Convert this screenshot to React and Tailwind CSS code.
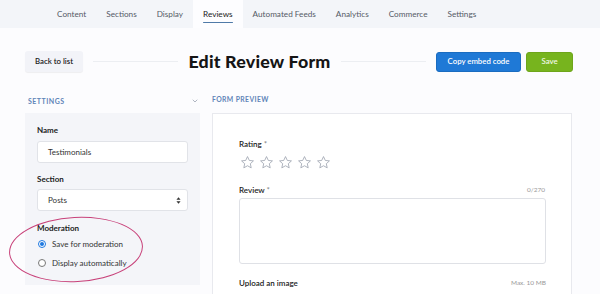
import { ChevronDown } from 'lucide-react';

const tabs = ['Content', 'Sections', 'Display', 'Reviews', 'Automated Feeds', 'Analytics', 'Commerce', 'Settings'];

function Star() {
  return (
    <svg width="15" height="15" viewBox="0 0 24 24" fill="none" stroke="#9ca3af" strokeWidth="1.3" strokeLinejoin="round">
      <path d="M12 2.5l2.9 6.2 6.6.7-5 4.5 1.4 6.6L12 17.2l-5.9 3.3 1.4-6.6-5-4.5 6.6-.7z" />
    </svg>
  );
}

export default function App() {
  return (
    <div className="w-[600px] h-[294px] overflow-hidden bg-[#fcfcfe] text-[#1f2328]" style={{ fontFamily: 'Lato, "Open Sans", sans-serif' }}>
      {/* Tabs */}
      <div className="h-[28px] bg-[#f3f5f9] flex pl-[47px]">
        {tabs.map((t) => (
          <div
            key={t}
            className={`relative px-[10px] flex items-center text-[8.2px] ${t === 'Reviews' ? 'bg-[#fdfdff] text-[#222]' : 'text-[#555b66]'}`}
          >
            {t}
            {t === 'Reviews' && <div className="absolute left-[10px] right-[10px] bottom-[5px] h-[1.5px] bg-[#4f7aa8] rounded" />}
          </div>
        ))}
      </div>

      {/* Header */}
      <div className="flex items-center mt-[23px] h-[21px] pl-[25px] pr-[27px]">
        <button className="h-[21px] w-[58px] rounded-[3px] bg-[#f2f3f8] shadow-[0_1px_1px_rgba(0,0,0,0.06)] text-[7.8px] font-semibold text-[#222]">
          Back to list
        </button>
        <div className="flex-1 h-px bg-[#eceef2] mx-[10px]" />
        <h1 className="text-[17.8px] leading-[21px] font-black tracking-[0.2px] text-[#151515]">Edit Review Form</h1>
        <div className="flex-1 h-px bg-[#eceef2] mx-[10px]" />
        <button className="h-[20px] w-[85px] rounded-[3px] bg-[#1f79d6] text-white text-[7.8px] font-semibold border border-[#1a6cc0]">
          Copy embed code
        </button>
        <button className="ml-[5px] h-[20px] w-[47px] rounded-[3px] bg-[#77b41e] text-[#f1f8e4] text-[7.8px] font-semibold border border-[#6ea51b]">
          Save
        </button>
      </div>

      {/* Body */}
      <div className="flex gap-[12px] pl-[25px] mt-[22px]">
        {/* Settings */}
        <div className="w-[175px] shrink-0">
          <div className="flex items-center justify-between h-[14px] pl-[3px] pr-[1px]">
            <span className="text-[7px] font-bold tracking-[0.5px] text-[#5f84b8]">SETTINGS</span>
            <ChevronDown className="w-[8px] h-[8px] text-[#8a93a3]" strokeWidth={2} />
          </div>
          <div className="relative mt-[5px] bg-[#f4f5f9] h-[172px] px-[12px] pt-[11px]">
            <div className="text-[8px] leading-[12px] font-bold text-[#222]">Name</div>
            <div className="mt-[5px] h-[22px] w-[151px] bg-white border border-[#e1e3e8] rounded-[3px] flex items-center pl-[10px] text-[8px] text-[#333]">
              Testimonials
            </div>
            <div className="mt-[10px] text-[8px] leading-[12px] font-bold text-[#222]">Section</div>
            <div className="mt-[4px] h-[22px] w-[151px] bg-white border border-[#e1e3e8] rounded-[3px] flex items-center justify-between pl-[10px] pr-[6px] text-[8px] text-[#333]">
              Posts
              <svg width="5" height="9" viewBox="0 0 6 10" fill="#333">
                <path d="M3 1L5.5 4H0.5z" />
                <path d="M3 9L5.5 6H0.5z" />
              </svg>
            </div>
            <div className="mt-[11px] text-[8px] leading-[12px] font-bold text-[#222]">Moderation</div>
            <div className="mt-[4px] h-[12px] flex items-center gap-[6px] text-[8px] text-[#333] pl-[1px]">
              <span className="w-[8px] h-[8px] rounded-full border border-[#1e78e0] bg-white flex items-center justify-center">
                <span className="w-[4.5px] h-[4.5px] rounded-full bg-[#1e78e0]" />
              </span>
              Save for moderation
            </div>
            <div className="mt-[7px] h-[12px] flex items-center gap-[6px] text-[8px] text-[#333] pl-[1px]">
              <span className="w-[8px] h-[8px] rounded-full border border-[#777] bg-white" />
              Display automatically
            </div>
            {/* Highlight ring */}
            <div className="absolute left-[-16px] top-[104px] w-[134px] h-[65px] rounded-[50%] border-[1.5px] border-[#c8427a] rotate-[-3deg]" />
          </div>
        </div>

        {/* Preview */}
        <div className="w-[360px] shrink-0">
          <div className="h-[14px] flex items-center -mt-[2px]">
            <span className="text-[6.8px] font-bold tracking-[0.4px] text-[#5f84b8]">FORM PREVIEW</span>
          </div>
          <div className="mt-[7px] h-[200px] bg-white border border-[#e8e9ee] px-[26px] pt-[24px]">
            <div className="text-[8px] leading-[12px] font-semibold text-[#222]">
              Rating <span className="text-[#888]">*</span>
            </div>
            <div className="flex gap-[4px] mt-[5px] ml-[1px]">
              <Star />
              <Star />
              <Star />
              <Star />
              <Star />
            </div>
            <div className="mt-[14px] h-[12px] flex justify-between items-center">
              <span className="text-[8px] font-semibold text-[#222]">
                Review <span className="text-[#888]">*</span>
              </span>
              <span className="text-[6.5px] text-[#999]">0/270</span>
            </div>
            <div className="mt-[2px] h-[66px] w-[307px] border border-[#dfe1e6] rounded-[3px]" />
            <div className="mt-[13px] h-[12px] w-[307px] flex justify-between items-center">
              <span className="text-[8px] font-semibold text-[#222]">Upload an image</span>
              <span className="text-[6.5px] text-[#999]">Max. 10 MB</span>
            </div>
          </div>
        </div>
      </div>
    </div>
  );
}
